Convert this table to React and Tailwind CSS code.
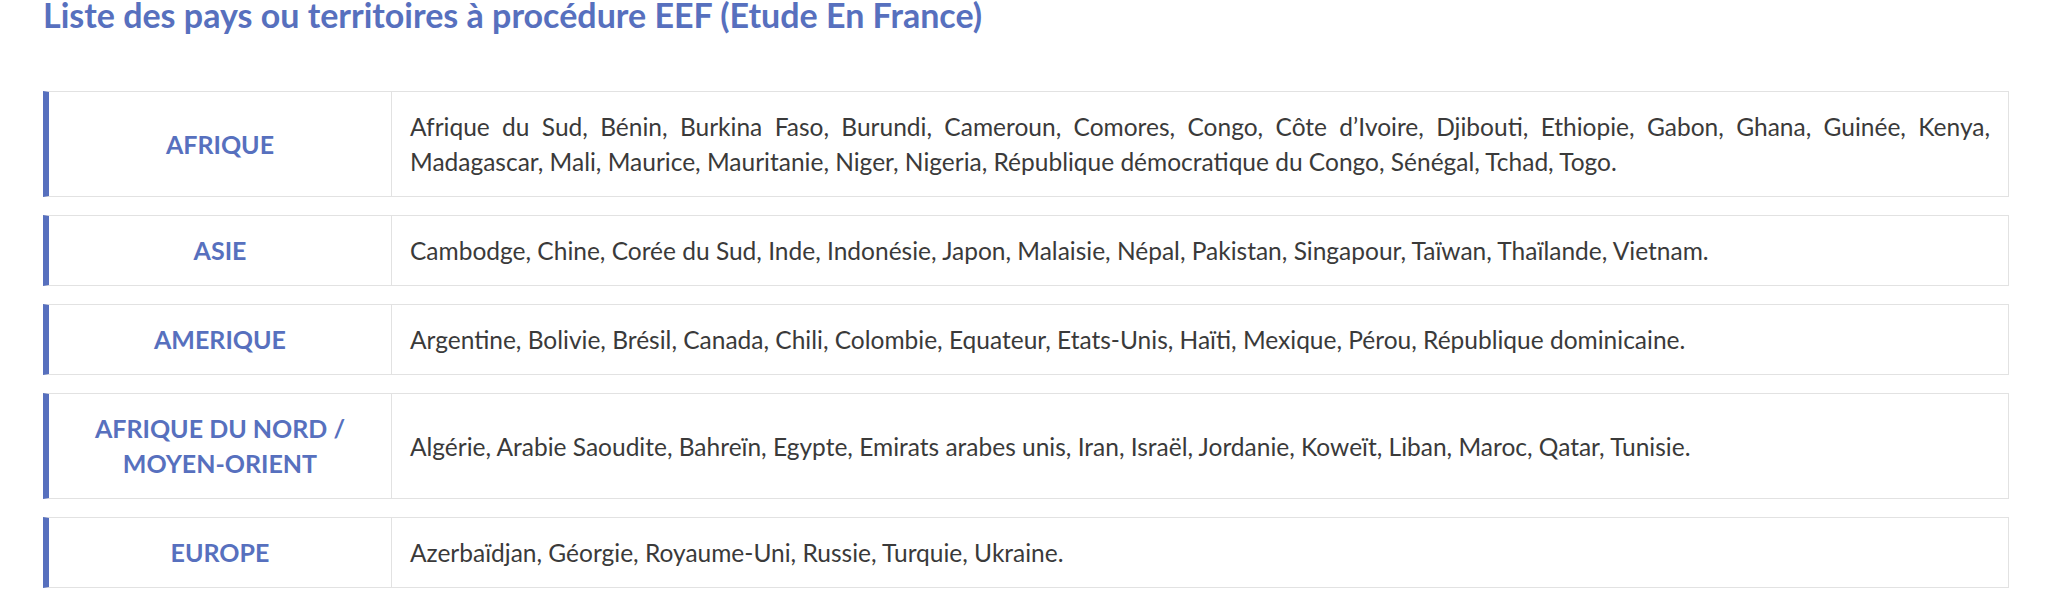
import React from 'react';

const zones = [
  {
    name: ['AFRIQUE'],
    countries:
      'Afrique du Sud, Bénin, Burkina Faso, Burundi, Cameroun, Comores, Congo, Côte d’Ivoire, Djibouti, Ethiopie, Gabon, Ghana, Guinée, Kenya, Madagascar, Mali, Maurice, Mauritanie, Niger, Nigeria, République démocratique du Congo, Sénégal, Tchad, Togo.',
  },
  {
    name: ['ASIE'],
    countries:
      'Cambodge, Chine, Corée du Sud, Inde, Indonésie, Japon, Malaisie, Népal, Pakistan, Singapour, Taïwan, Thaïlande, Vietnam.',
  },
  {
    name: ['AMERIQUE'],
    countries:
      'Argentine, Bolivie, Brésil, Canada, Chili, Colombie, Equateur, Etats-Unis, Haïti, Mexique, Pérou, République dominicaine.',
  },
  {
    name: ['AFRIQUE DU NORD /', 'MOYEN-ORIENT'],
    countries:
      'Algérie, Arabie Saoudite, Bahreïn, Egypte, Emirats arabes unis, Iran, Israël, Jordanie, Koweït, Liban, Maroc, Qatar, Tunisie.',
  },
  {
    name: ['EUROPE'],
    countries: 'Azerbaïdjan, Géorgie, Royaume-Uni, Russie, Turquie, Ukraine.',
  },
];

export default function App() {
  return (
    <div className="w-[2048px] h-[610px] bg-white font-['Lato',sans-serif] overflow-hidden">
      <h2 className="ml-[43px] text-[34px] leading-[28px] pt-[1px] font-bold text-[#5770be]">
        Liste des pays ou territoires à procédure EEF (Etude En France)
      </h2>

      <div className="ml-[43px] mt-[62px] w-[1966px] flex flex-col gap-[18px]">
        {zones.map((z) => (
          <div
            key={z.name[0]}
            className="flex border-y border-r border-[#e2e2e2] border-l-[6px] border-l-[#5770be]"
          >
            <div className="w-[343px] shrink-0 flex items-center justify-center py-[17px] text-center border-r border-[#e2e2e2] text-[25px] leading-[35px] font-bold text-[#5770be]">
              <div>
                {z.name.map((n) => (
                  <div key={n}>{n}</div>
                ))}
              </div>
            </div>
            <div className="flex-1 flex items-center px-[18px] py-[17px] text-[24.5px] leading-[35px] text-[#3a3a3a]">
              <p className="w-full text-justify">{z.countries}</p>
            </div>
          </div>
        ))}
      </div>
    </div>
  );
}
